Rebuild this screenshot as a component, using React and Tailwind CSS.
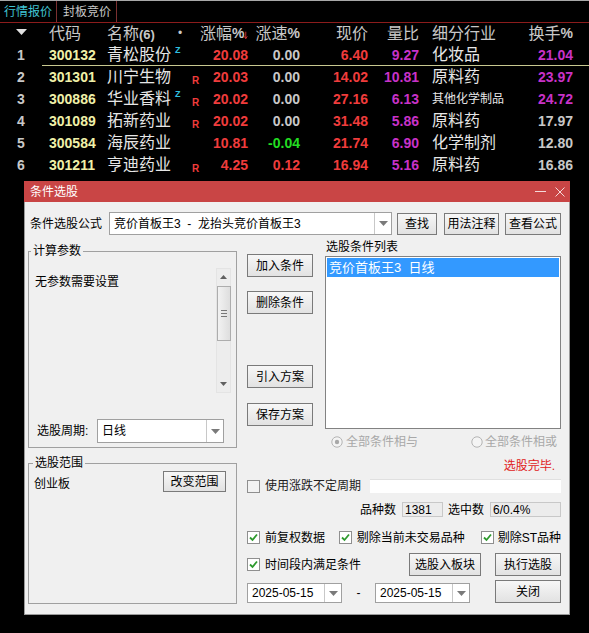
import React from 'react';

const rows = [
  { n: 1, code: '300132', name: '青松股份', z: true, r: false, zf: '20.08', zs: '0.00', zsc: 'text-[#c8c8c8]', price: '6.40', lb: '9.27', ind: '化妆品', hs: '21.04', hsc: 'text-[#c832c8]' },
  { n: 2, code: '301301', name: '川宁生物', z: false, r: true, zf: '20.03', zs: '0.00', zsc: 'text-[#c8c8c8]', price: '14.02', lb: '10.81', ind: '原料药', hs: '23.97', hsc: 'text-[#c832c8]' },
  { n: 3, code: '300886', name: '华业香料', z: true, r: true, zf: '20.02', zs: '0.00', zsc: 'text-[#c8c8c8]', price: '27.16', lb: '6.13', ind: '其他化学制品', small: true, hs: '24.72', hsc: 'text-[#c832c8]' },
  { n: 4, code: '301089', name: '拓新药业', z: false, r: true, zf: '20.02', zs: '0.00', zsc: 'text-[#c8c8c8]', price: '31.48', lb: '5.86', ind: '原料药', hs: '17.97', hsc: 'text-[#c8c8c8]' },
  { n: 5, code: '300584', name: '海辰药业', z: false, r: false, zf: '10.81', zs: '-0.04', zsc: 'text-[#22dd22]', price: '21.74', lb: '6.90', ind: '化学制剂', hs: '12.80', hsc: 'text-[#c8c8c8]' },
  { n: 6, code: '301211', name: '亨迪药业', z: false, r: true, zf: '4.25', zs: '0.12', zsc: 'text-[#f03c3c]', price: '16.94', lb: '5.16', ind: '原料药', hs: '16.86', hsc: 'text-[#c8c8c8]' },
];

function Row({ r }) {
  return (
    <div className="flex h-[22px]">
      <div className="w-[42px] text-center text-[14px] font-bold leading-[22px] text-[#c8c8c8]">{r.n}</div>
      <div className={`flex flex-1 ${r.n === 1 ? 'border-b border-[#c8c890]' : ''}`}>
        <div className="w-[65px] pl-[7px] text-[14px] font-bold leading-[22px] text-[#f0f0a8]">{r.code}</div>
        <div className="flex w-[85px] items-start">
          <span className="text-[16px] leading-[22px] text-[#e6e6e6]">{r.name}</span>
          {r.z && <span className="ml-[4px] mt-[1px] text-[9px] font-bold leading-[10px] text-[#30c0e0]">Z</span>}
        </div>
        <div className="w-[8px] pt-[9px] text-[10px] font-bold leading-[12px] text-[#f03c3c]">{r.r ? 'R' : ''}</div>
        <div className="w-[48px] text-right text-[14px] font-bold leading-[22px] text-[#f03c3c]">{r.zf}</div>
        <div className={`w-[52px] text-right text-[14px] font-bold leading-[22px] ${r.zsc}`}>{r.zs}</div>
        <div className="w-[68px] text-right text-[14px] font-bold leading-[22px] text-[#f03c3c]">{r.price}</div>
        <div className="w-[51px] text-right text-[14px] font-bold leading-[22px] text-[#c832c8]">{r.lb}</div>
        <div className={`w-[86px] whitespace-nowrap pl-[13px] leading-[22px] text-[#e6e6e6] ${r.small ? 'text-[12px]' : 'text-[16px]'}`}>{r.ind}</div>
        <div className={`w-[68px] text-right text-[14px] font-bold leading-[22px] ${r.hsc}`}>{r.hs}</div>
      </div>
    </div>
  );
}

function Btn({ children, className = '' }) {
  return (
    <button className={`flex items-center justify-center whitespace-nowrap border border-[#7a7a7a] bg-linear-to-b from-[#f7f7f7] to-[#e2e2e2] text-[12px] leading-none text-black ${className}`}>
      {children}
    </button>
  );
}

function Arrow() {
  return (
    <svg width="9" height="5" viewBox="0 0 9 5">
      <polygon points="0,0 9,0 4.5,5" fill="#7a7a7a" />
    </svg>
  );
}

function Combo({ text, className = '' }) {
  return (
    <div className={`flex border border-[#a0a0a0] bg-white ${className}`}>
      <div className="flex flex-1 items-center whitespace-pre pl-[4px] text-[12px] text-black">{text}</div>
      <div className="flex w-[17px] items-center justify-center border-l border-[#c8c8c8]">
        <Arrow />
      </div>
    </div>
  );
}

function Check({ checked }) {
  return (
    <div className={`flex h-[13px] w-[13px] shrink-0 items-center justify-center border border-[#8f8f8f] ${checked ? 'bg-white' : 'bg-[#f2f2f2]'}`}>
      {checked && (
        <svg width="9" height="9" viewBox="0 0 9 9">
          <path d="M1 4.5 L3.5 7 L8 1.5" stroke="#2e9a2e" strokeWidth="1.8" fill="none" />
        </svg>
      )}
    </div>
  );
}

function Radio({ on }) {
  return (
    <svg width="12" height="12" viewBox="0 0 12 12" className="shrink-0">
      <circle cx="6" cy="6" r="5.2" fill="#f4f4f4" stroke="#b4b4b4" strokeWidth="1" />
      {on && <circle cx="6" cy="6" r="2.2" fill="#a8a8a8" />}
    </svg>
  );
}

export default function App() {
  return (
    <div className="h-[633px] w-[589px] overflow-hidden bg-black font-[family-name:Liberation_Sans,Noto_Sans_CJK_SC,sans-serif]">
      {/* tabs */}
      <div className="h-[1px] bg-[#a8a8a8]" />
      <div className="flex h-[22px] border-b border-[#8c1c1c]">
        <div className="flex w-[57px] items-center border-r border-[#7a3030] pl-[4px] text-[12px] text-[#40c4d4]">行情报价</div>
        <div className="flex w-[60px] items-center border-r border-[#7a3030] pl-[6px] text-[12px] text-[#c8c8c8]">封板竞价</div>
      </div>

      {/* header */}
      <div className="flex h-[21px] items-center text-[16px] leading-[21px] text-[#c8c8c8]">
        <div className="flex w-[42px] justify-center pb-[3px]">
          <svg width="11" height="6" viewBox="0 0 11 6">
            <polygon points="0,0 11,0 5.5,6" fill="#e0e0e0" />
          </svg>
        </div>
        <div className="w-[65px] pl-[7px]">代码</div>
        <div className="flex w-[85px] items-center">
          <span className="w-[71px]">名称<span className="text-[13px] font-bold">(6)</span></span>
          <span className="text-[12px]">•</span>
        </div>
        <div className="w-[8px]" />
        <div className="flex w-[48px] items-center justify-end whitespace-nowrap">
          涨幅<span className="text-[14px] font-bold">%</span>
          <svg width="6" height="13" viewBox="0 0 6 13" className="mt-[3px]">
            <path d="M3 0 V11 M0.5 8 L3 12 L5.5 8" stroke="#f03c3c" strokeWidth="1.4" fill="none" />
          </svg>
        </div>
        <div className="flex w-[52px] justify-end whitespace-nowrap">涨速<span className="text-[14px] font-bold">%</span></div>
        <div className="w-[68px] text-right">现价</div>
        <div className="w-[51px] text-right">量比</div>
        <div className="w-[86px] pl-[13px]">细分行业</div>
        <div className="flex w-[68px] justify-end whitespace-nowrap">换手<span className="text-[14px] font-bold">%</span></div>
      </div>

      {rows.map((r) => (
        <Row key={r.n} r={r} />
      ))}

      {/* dialog */}
      <div className="ml-[24px] mt-[5px] w-[546px] whitespace-nowrap text-[12px] text-black">
        <div className="flex h-[21px] items-center bg-[#c94545] pl-[6px] pr-[5px] text-white">
          <span className="flex-1">条件选股</span>
          <svg width="11" height="11" viewBox="0 0 11 11" className="mr-[9px]">
            <path d="M0 5.5 H11" stroke="#f4dada" strokeWidth="1" />
          </svg>
          <svg width="10" height="10" viewBox="0 0 10 10">
            <path d="M0.5 0.5 L9.5 9.5 M9.5 0.5 L0.5 9.5" stroke="#f4dada" strokeWidth="1" />
          </svg>
        </div>
        <div className="h-[413px] border-x border-b border-[#9a9a9a] bg-[#f0f0f0]">
          {/* formula row */}
          <div className="flex items-center pl-[5px] pt-[10px]">
            <span className="w-[72px] leading-[16px]">条件选股公式</span>
            <Combo text="竞价首板王3  -  龙抬头竞价首板王3" className="ml-[7px] h-[23px] w-[283px]" />
            <Btn className="ml-[5px] h-[22px] w-[40px]">查找</Btn>
            <Btn className="ml-[7px] h-[22px] w-[55px]">用法注释</Btn>
            <Btn className="ml-[6px] h-[22px] w-[56px]">查看公式</Btn>
          </div>

          <div className="flex">
            {/* left column */}
            <div className="ml-[3px] w-[209px]">
              <fieldset className="mt-[8px] h-[205px] border border-[#a0a0a0]">
                <legend className="ml-[2px] px-[2px] leading-[16px]">计算参数</legend>
                <div className="flex pt-[9px]">
                  <div className="flex-1 pl-[6px] pt-[6px] leading-[16px]">无参数需要设置</div>
                  <div className="mr-[5px] flex h-[125px] w-[15px] flex-col items-center border border-[#e4e4e4] bg-[#ededed]">
                    <svg width="7" height="4" viewBox="0 0 7 4" className="mt-[6px]">
                      <polygon points="0,4 7,4 3.5,0" fill="#606060" />
                    </svg>
                    <div className="mt-[7px] flex h-[55px] w-[14px] flex-col items-center justify-center gap-[2px] border border-[#adadad] bg-linear-to-r from-[#f2f2f2] to-[#dedede]">
                      <div className="h-[1px] w-[6px] bg-[#777]" />
                      <div className="h-[1px] w-[6px] bg-[#777]" />
                      <div className="h-[1px] w-[6px] bg-[#777]" />
                    </div>
                    <div className="flex-1" />
                    <svg width="7" height="4" viewBox="0 0 7 4" className="mb-[6px]">
                      <polygon points="0,0 7,0 3.5,4" fill="#606060" />
                    </svg>
                  </div>
                </div>
                <div className="mt-[26px] flex items-center pl-[8px]">
                  <span className="w-[60px]">选股周期:</span>
                  <Combo text="日线" className="h-[24px] w-[127px]" />
                </div>
              </fieldset>

              <fieldset className="mt-[7px] h-[149px] border border-[#a0a0a0]">
                <legend className="ml-[4px] px-[2px] leading-[16px]">选股范围</legend>
                <div className="flex items-start justify-between">
                  <span className="mt-[5px] pl-[5px] leading-[16px]">创业板</span>
                  <Btn className="mr-[10px] h-[21px] w-[63px]">改变范围</Btn>
                </div>
              </fieldset>
            </div>

            {/* right column */}
            <div className="ml-[10px] w-[314px]">
              <div className="flex">
                <div className="flex w-[66px] flex-col">
                  <Btn className="mt-[19px] h-[23px] w-[66px]">加入条件</Btn>
                  <Btn className="mt-[14px] h-[23px] w-[66px]">删除条件</Btn>
                  <Btn className="mt-[51px] h-[23px] w-[66px]">引入方案</Btn>
                  <Btn className="mt-[15px] h-[23px] w-[66px]">保存方案</Btn>
                </div>
                <div className="ml-[12px] w-[236px]">
                  <div className="mt-[4px] pl-[1px] leading-[16px]">选股条件列表</div>
                  <div className="mt-[1px] h-[173px] border border-[#828282] bg-white p-[1px]">
                    <div className="flex h-[19px] items-center whitespace-pre bg-[#3399ff] pl-[2px] text-[13px] text-white">竞价首板王3  日线</div>
                  </div>
                </div>
              </div>

              <div className="mt-[5px] flex h-[16px] items-center text-[#a8a8a8]">
                <div className="ml-[84px] flex w-[140px] items-center">
                  <Radio on />
                  <span className="ml-[3px]">全部条件相与</span>
                </div>
                <Radio />
                <span className="ml-[2px]">全部条件相或</span>
              </div>

              <div className="mt-[8px] h-[16px] pr-[6px] text-right leading-[16px] text-[#e02020]">选股完毕.</div>

              <div className="mt-[5px] flex h-[14px] items-center">
                <Check />
                <span className="ml-[5px] text-[#202020]">使用涨跌不定周期</span>
                <div className="ml-auto h-[14px] w-[191px] border-t border-[#e0e0e0] bg-white" />
              </div>

              <div className="mt-[9px] flex h-[15px] items-center justify-end">
                <span>品种数</span>
                <div className="ml-[6px] flex h-[15px] w-[41px] items-center border border-[#c8c8c8] bg-[#ececec] pl-[2px]">1381</div>
                <span className="ml-[5px]">选中数</span>
                <div className="ml-[6px] flex h-[15px] w-[71px] items-center border border-[#c8c8c8] bg-[#ececec] pl-[2px]">6/0.4%</div>
              </div>

              <div className="mt-[14px] flex h-[13px] items-center">
                <div className="flex w-[92px] items-center">
                  <Check checked />
                  <span className="ml-[5px]">前复权数据</span>
                </div>
                <div className="flex w-[142px] items-center">
                  <Check checked />
                  <span className="ml-[5px]">剔除当前未交易品种</span>
                </div>
                <div className="flex items-center">
                  <Check checked />
                  <span className="ml-[4px]">剔除ST品种</span>
                </div>
              </div>

              <div className="mt-[9px] flex h-[23px] items-center">
                <div className="flex w-[162px] items-center">
                  <Check checked />
                  <span className="ml-[5px]">时间段内满足条件</span>
                </div>
                <Btn className="h-[23px] w-[72px]">选股入板块</Btn>
                <Btn className="ml-[14px] h-[23px] w-[66px]">执行选股</Btn>
              </div>

              <div className="mt-[4px] flex h-[23px] items-end">
                <Combo text="2025-05-15" className="h-[20px] w-[95px]" />
                <span className="w-[33px] text-center leading-[20px]">-</span>
                <Combo text="2025-05-15" className="h-[20px] w-[95px]" />
                <Btn className="ml-[25px] h-[23px] w-[66px]">关闭</Btn>
              </div>
            </div>
          </div>
        </div>
      </div>
    </div>
  );
}
